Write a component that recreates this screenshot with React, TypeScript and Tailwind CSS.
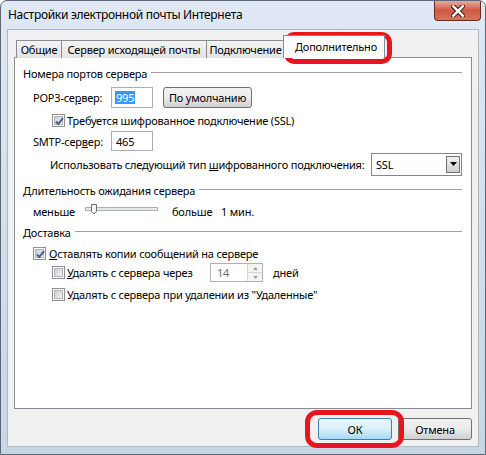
const font = { fontFamily: '"Noto Sans", "Liberation Sans", sans-serif', letterSpacing: '-0.2px' };

function CheckBox({ checked }: { checked?: boolean }) {
  return (
    <div className="w-[13px] h-[13px] shrink-0 border border-[#8e8f8f] bg-white p-[1px]">
      <div className="w-full h-full border border-[#aeb3b9] bg-gradient-to-br from-[#cbcfd5] to-[#f6f6f6] relative">
        {checked && (
          <svg width="11" height="11" viewBox="0 0 11 11" className="absolute -left-[1px] -top-[1px]">
            <path d="M2 5.5 L4.3 8 L9 2.2" fill="none" stroke="#4a5f97" strokeWidth="2" />
          </svg>
        )}
      </div>
    </div>
  );
}

function GroupHeader({ title }: { title: React.ReactNode }) {
  return (
    <div className="flex items-center h-[18px] pl-[8px] pr-[9px]">
      <span>{title}</span>
      <div className="flex-1 ml-[4px] h-[2px] border-t border-[#a0a0a0] border-b-white" />
    </div>
  );
}

function Tab({ label, w }: { label: string; w: string }) {
  return (
    <div className={`${w} h-[18px] border border-b-0 border-[#898c95] bg-gradient-to-b from-[#f3f3f3] to-[#e3e3e3] flex items-center justify-center -ml-[1px]`}>
      {label}
    </div>
  );
}

export default function App() {
  return (
    <div className="w-[486px] h-[455px] bg-white whitespace-nowrap" style={font}>
      <div className="w-[486px] h-[455px] flex flex-col rounded-t-[7px] border border-[#5a6776] bg-gradient-to-b from-[#dfe8f3] via-[#d3dfed] to-[#c8d6e6] text-[11px] text-black leading-none relative overflow-hidden">
        {/* title bar */}
        <div className="h-[28px] flex items-start shrink-0">
          <div className="pl-[7px] pt-[8px] text-[12px] tracking-[-0.3px]">Настройки электронной почты Интернета</div>
          <div className="ml-auto mr-[4px] w-[47px] h-[20px] rounded-b-[4px] border border-t-0 border-[#6b2a22] bg-gradient-to-b from-[#e7a99b] via-[#cd5a44] to-[#d8735c] flex items-center justify-center">
            <svg width="14" height="12" viewBox="0 0 14 12">
              <path d="M2 1 L12 11 M12 1 L2 11" stroke="#3a1b18" strokeWidth="4.5" strokeLinecap="square" />
              <path d="M2.3 1.3 L11.7 10.7 M11.7 1.3 L2.3 10.7" stroke="#ffffff" strokeWidth="2.5" strokeLinecap="square" />
            </svg>
          </div>
        </div>

        {/* client area */}
        <div className="mx-[6px] mb-[7px] flex-1 bg-[#f0f0f0] border border-[#aab8c8] flex flex-col px-[6px] pt-[5px]">
          {/* tabs */}
          <div className="flex items-end h-[23px] pl-[3px] relative z-10 -mb-[1px]">
            <Tab label="Общие" w="w-[46px]" />
            <Tab label="Сервер исходящей почты" w="w-[146px]" />
            <Tab label="Подключение" w="w-[79px]" />
            <div className="w-[102px] h-[23px] -ml-[2px] border border-b-0 border-[#898c95] bg-white flex items-center pl-[11px] pb-[1px]">
              Дополнительно
            </div>
          </div>

          {/* panel */}
          <div className="h-[352px] bg-white border border-[#898c95] flex flex-col pt-[6px]">
            <GroupHeader title="Номера портов сервера" />

            <div className="flex items-center h-[22px] mt-[4px] pl-[18px]">
              <span className="w-[78px]">POP3-се<u>р</u>вер:</span>
              <div className="w-[42px] h-[21px] border border-[#abadb3] bg-white flex items-center pl-[3px]">
                <span className="bg-[#3399ff] text-white px-[1px] py-[1px]">995</span>
              </div>
              <div className="ml-[10px] w-[89px] h-[21px] rounded-[3px] border border-[#707070] bg-gradient-to-b from-[#f2f2f2] via-[#ebebeb] to-[#cfcfcf] flex items-center justify-center">
                По умолчанию
              </div>
            </div>

            <div className="flex items-center h-[21px] mt-[2px] pl-[37px] gap-[2px]">
              <CheckBox checked />
              <span>Требуется шифрованное подключение (SSL)</span>
            </div>

            <div className="flex items-center h-[20px] pl-[18px]">
              <span className="w-[78px]">SMTP-сер<u>в</u>ер:</span>
              <div className="w-[42px] h-[20px] border border-[#abadb3] bg-white flex items-center pl-[4px]">465</div>
            </div>

            <div className="flex items-center h-[24px] mt-[1px] pl-[35px]">
              <span>Использовать следующий тип <u>ш</u>ифрованного подключения:</span>
              <div className="ml-auto mr-[9px] w-[91px] h-[23px] border border-[#828790] bg-white flex items-center pl-[4px] pr-[1px]">
                <span>SSL</span>
                <div className="ml-auto w-[14px] h-[17px] border border-[#707070] bg-gradient-to-b from-[#f2f2f2] to-[#cfcfcf] flex items-center justify-center">
                  <svg width="7" height="4" viewBox="0 0 7 4"><path d="M0 0 H7 L3.5 4 Z" fill="#000" /></svg>
                </div>
              </div>
            </div>

            <div className="mt-[5px]">
              <GroupHeader title={<><u>Д</u>лительность ожидания сервера</>} />
            </div>

            <div className="flex items-center h-[18px] mt-[3px] pl-[18px]">
              <span className="w-[52px]">меньше</span>
              <svg width="74" height="12" viewBox="0 0 74 12" className="-mt-[4px]">
                <rect x="0.5" y="4.5" width="72" height="3" fill="#e7eaea" stroke="#b0b0b0" />
                <path d="M6.5 1.5 H11.5 V8.5 L9 11 L6.5 8.5 Z" fill="#f4f4f4" stroke="#707070" />
              </svg>
              <span className="ml-[13px] w-[49px]">больше</span>
              <span>1 мин.</span>
            </div>

            <div className="mt-[3px]">
              <GroupHeader title="Доставка" />
            </div>

            <div className="flex items-center h-[20px] mt-[2px] pl-[18px] gap-[3px]">
              <CheckBox checked />
              <span><u>О</u>ставлять копии сообщений на сервере</span>
            </div>

            <div className="flex items-center h-[19px] pl-[37px] gap-[2px]">
              <CheckBox />
              <span className="w-[141px]"><u>У</u>далять с сервера через</span>
              <div className="w-[53px] h-[19px] border border-[#adb2b5] bg-white flex items-center pl-[6px] text-[#6d6d6d]">
                <span>14</span>
                <div className="ml-auto h-full w-[15px] border-l border-[#d5d5d5] flex flex-col bg-[#f4f4f4]">
                  <div className="flex-1 flex items-center justify-center border-b border-[#d5d5d5]">
                    <svg width="5" height="3" viewBox="0 0 5 3"><path d="M0 3 L2.5 0 L5 3 Z" fill="#a0a0a0" /></svg>
                  </div>
                  <div className="flex-1 flex items-center justify-center">
                    <svg width="5" height="3" viewBox="0 0 5 3"><path d="M0 0 L2.5 3 L5 0 Z" fill="#a0a0a0" /></svg>
                  </div>
                </div>
              </div>
              <span className="ml-[8px]">дней</span>
            </div>

            <div className="flex items-center h-[18px] mt-[3px] pl-[37px] gap-[2px]">
              <CheckBox />
              <span>У<u>д</u>алять с сервера при удалении из "Удаленные"</span>
            </div>
          </div>

          {/* buttons */}
          <div className="flex justify-end gap-[6px] mt-[9px]">
            <div className="w-[74px] h-[22px] rounded-[3px] border border-[#3c7fb1] bg-gradient-to-b from-[#eaf6fd] via-[#d9f0fc] to-[#a7d9f5] flex items-center justify-center">
              ОК
            </div>
            <div className="w-[74px] h-[22px] rounded-[3px] border border-[#707070] bg-gradient-to-b from-[#f2f2f2] via-[#ebebeb] to-[#cfcfcf] flex items-center justify-center">
              Отмена
            </div>
          </div>
        </div>

        {/* red annotation marks */}
        <div className="absolute left-[283px] top-[31px] w-[108px] h-[32px] rounded-[10px] border-[5px] border-[#e8141e]" />
        <div className="absolute left-[304px] top-[409px] w-[99px] h-[38px] rounded-[12px] border-[5px] border-[#e8141e]" />
      </div>
    </div>
  );
}
